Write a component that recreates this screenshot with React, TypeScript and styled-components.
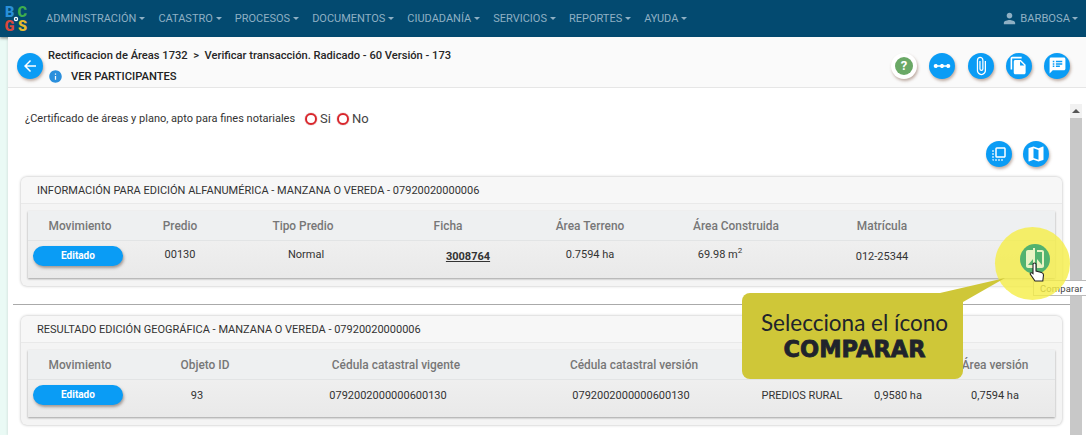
import React from 'react';
import styled, { createGlobalStyle } from 'styled-components';
import {
  MdArrowBack,
  MdAttachFile,
  MdCompare,
  MdFileCopy,
  MdFlipToFront,
  MdInfo,
  MdLinearScale,
  MdMap,
  MdPerson,
  MdSpeakerNotes,
} from 'react-icons/md';

const GlobalStyle = createGlobalStyle`
  html, body { margin: 0; padding: 0; height: 435px; overflow: hidden; background: #eafaf5; }
  body { font-family: Roboto, "Liberation Sans", sans-serif; color: #333; }
`;

const Page = styled.div`
  width: 1086px;
  height: 435px;
  position: relative;
  overflow: hidden;
`;

const Navbar = styled.header`
  height: 37px;
  background: #034a70;
  box-shadow: 0 1px 3px rgba(0, 0, 0, 0.5);
  display: flex;
  align-items: center;
  padding: 0 8px 0 3px;
  box-sizing: border-box;
`;

const Logo = styled.svg`
  width: 26px;
  height: 31px;
  margin-right: 17px;
  flex: none;
`;

const LogoLetter = styled.text`
  font-family: Roboto, sans-serif;
  font-weight: 900;
  font-size: 14.5px;
`;

const NavItem = styled.span`
  font-size: 11px;
  color: #8fb0c4;
  margin-right: 13px;
  white-space: nowrap;
  display: flex;
  align-items: center;
  &::after {
    content: '';
    margin-left: 3px;
    border-left: 3px solid transparent;
    border-right: 3px solid transparent;
    border-top: 3px solid #8fb0c4;
  }
`;

const NavUser = styled(NavItem)`
  && {
    margin: 0 0 0 auto;
  }
  font-size: 11.2px;
  gap: 2px;
  &::after {
    margin-left: 0;
  }
`;

const Content = styled.main`
  margin-left: 8px;
  height: 398px;
  background: #fff;
  box-shadow: -1px 0 2px rgba(0, 0, 0, 0.08);
`;

const TopBar = styled.div`
  height: 51px;
  background: #fafafa;
  border-bottom: 1px solid #e6e6e6;
  box-sizing: border-box;
  display: flex;
  align-items: center;
  padding: 7px 16px 0 9px;
`;

const RoundButton = styled.span<{ $white?: boolean; $size?: number }>`
  width: ${p => p.$size ?? 26}px;
  height: ${p => p.$size ?? 26}px;
  border-radius: 50%;
  flex: none;
  display: flex;
  align-items: center;
  justify-content: center;
  color: #fff;
  font-size: 18px;
  background: ${p => (p.$white ? '#fff' : '#0a9cf5')};
  box-shadow: 1px 2px 3px rgba(120, 80, 60, 0.45);
`;

const Crumbs = styled.div`
  margin-left: 5px;
  padding-top: 2px;
  display: flex;
  flex-direction: column;
  gap: 7px;
`;

const CrumbLine = styled.div`
  font-size: 11.15px;
  font-weight: 500;
  color: #262626;
  white-space: nowrap;
`;

const Participants = styled.div`
  display: flex;
  align-items: center;
  gap: 8px;
  font-size: 11.2px;
  font-weight: 500;
  color: #222;
  svg {
    width: 15px;
    height: 15px;
    color: #2a8fdc;
  }
`;

const TopActions = styled.div`
  margin-left: auto;
  display: flex;
  gap: 12.25px;
`;

const Green = styled.span`
  width: 18px;
  height: 18px;
  border-radius: 50%;
  background: #6aa866;
  color: #fff;
  font-size: 13px;
  font-weight: 700;
  line-height: 18px;
  text-align: center;
`;

const Body = styled.div`
  display: flex;
  height: 347px;
`;

const Scroll = styled.div`
  flex: 1;
  min-width: 0;
  padding: 0 0 0 5px;
`;

const Scrollbar = styled.div`
  width: 12px;
  margin: 16px 4px 0 0;
  flex: none;
  display: flex;
  flex-direction: column;
  align-items: center;
  background: #f1f1f1;
  &::before {
    content: '';
    margin: 5px 0;
    border-left: 4px solid transparent;
    border-right: 4px solid transparent;
    border-bottom: 4px solid #555;
  }
  &::after {
    content: '';
    flex: 1;
    align-self: stretch;
    background: #c8c8c8;
  }
`;

const Question = styled.div`
  display: flex;
  align-items: center;
  padding: 22px 0 0 12px;
  height: 17px;
  font-size: 11px;
  color: #333;
`;

const Radio = styled.span`
  width: 8px;
  height: 8px;
  border: 2px solid #d9252b;
  border-radius: 50%;
  box-shadow: 0 0 1px #a33;
  margin: 0 3px 0 10px;
`;

const RadioText = styled.span`
  font-size: 13px;
  color: #444;
  margin-right: -4px;
`;

const MapActions = styled.div`
  display: flex;
  justify-content: flex-end;
  gap: 11px;
  padding: 14px 21px 0 0;
  height: 25px;
`;

const Panel = styled.section`
  margin: 11px 0 0 8px;
  width: 1041px;
  box-sizing: border-box;
  border-radius: 6px;
  background: #f4f4f4;
  box-shadow: 0 0 3px rgba(0, 0, 0, 0.3);
  padding-bottom: 8px;
`;

const PanelTitle = styled.div`
  height: 26px;
  line-height: 28px;
  padding-left: 16px;
  font-size: 11px;
  color: #333;
  background: #f7f7f7;
  border-bottom: 1px solid #e9e9e9;
  border-radius: 6px 6px 0 0;
  margin-bottom: 7px;
`;

const Table = styled.div`
  margin: 0 7px;
  background: linear-gradient(#f4f4f4, #e9e9e9);
  box-shadow: 0 1px 2px rgba(0, 0, 0, 0.35);
`;

const Row = styled.div<{ $cols: string; $head?: boolean }>`
  display: grid;
  grid-template-columns: ${p => p.$cols};
  align-items: center;
  justify-items: center;
  box-sizing: border-box;
  height: ${p => (p.$head ? 30 : 37)}px;
  padding-bottom: ${p => (p.$head ? 0 : 7)}px;
  font-size: 11px;
  color: #333;
  ${p => p.$head && 'background: #eef0f1; border-bottom: 1px solid #e2e4e5; color: #777; font-size: 11.9px; font-weight: 500;'}
`;

const Pill = styled.span`
  width: 90px;
  height: 20px;
  border-radius: 10px;
  background: #0a9cf5;
  color: #fff;
  font-size: 10px;
  font-weight: 700;
  line-height: 20px;
  text-align: center;
  transform: translateX(-2px);
  box-shadow: 1px 2px 3px rgba(90, 70, 60, 0.5);
`;

const FichaLink = styled.span`
  font-weight: 700;
  text-decoration: underline;
  transform: translateX(20px);
`;

// Values in the reference sit a little off their column centre.
const Cell = styled.span<{ $x?: number; $y?: number }>`
  transform: translate(${p => p.$x ?? 0}px, ${p => p.$y ?? 0}px);
  sup {
    font-size: 8px;
    line-height: 0;
  }
`;

const Divider = styled.hr`
  margin: 18px 0 0;
  width: 1060px;
  border: none;
  border-top: 1px solid #aaa;
`;

const Tooltip = styled.div`
  position: absolute;
  left: 1033px;
  top: 280px;
  width: 53px;
  height: 16px;
  line-height: 15px;
  padding-left: 6px;
  background: #fff;
  border: 1px solid #bbb;
  border-right: none;
  box-sizing: border-box;
  font-size: 9.4px;
  letter-spacing: 0.2px;
  color: #444;
`;

const Highlight = styled.div`
  position: absolute;
  left: 995px;
  top: 227px;
  width: 75px;
  height: 73px;
  border-radius: 50%;
  background: rgba(245, 238, 70, 0.8);
  display: flex;
  align-items: center;
  justify-content: center;
`;

const CompareButton = styled.span`
  width: 30px;
  height: 30px;
  border-radius: 50%;
  background: #52b26f;
  color: #e9f3c4;
  font-size: 24px;
  transform: translate(2px, -5px);
  display: flex;
  align-items: center;
  justify-content: center;
`;

const Cursor = styled.svg`
  position: absolute;
  left: 1029px;
  top: 262px;
  width: 16px;
  height: 22px;
`;

const Callout = styled.div`
  position: absolute;
  left: 742px;
  top: 293px;
  width: 221px;
  height: 86px;
  border-radius: 8px;
  background: #cfc738;
  display: flex;
  flex-direction: column;
  align-items: center;
  justify-content: center;
  color: #20232c;
  &::before {
    content: '';
    position: absolute;
    left: 193px;
    top: -15px;
    width: 75px;
    height: 24px;
    background: #cfc738;
    clip-path: polygon(70px 0, 5px 15px, 28px 24px);
  }
`;

const CalloutLine = styled.div`
  font-family: Lato, sans-serif;
  font-size: 22.5px;
  line-height: 26px;
  transform: translateX(2px);
`;

const CalloutStrong = styled.div`
  font-family: "DejaVu Sans", sans-serif;
  font-weight: 700;
  font-size: 22.5px;
  line-height: 26px;
  transform: translateX(2px);
  -webkit-text-stroke: 0.8px #20232c;
`;

const menu = ['ADMINISTRACIÓN', 'CATASTRO', 'PROCESOS', 'DOCUMENTOS', 'CIUDADANÍA', 'SERVICIOS', 'REPORTES', 'AYUDA'];
const alfaCols = '104px 96px 150px 140px 144px 148px 144px 1fr';
const geoCols = '104px 146px 236px 240px 96px 96px 98px 1fr';

export default function App() {
  return (
    <Page>
      <GlobalStyle />
      <Navbar>
        <Logo viewBox="0 0 26 31">
          <LogoLetter x="2" y="13.5" fill="#2a90d8">B</LogoLetter>
          <LogoLetter x="14.5" y="13.5" fill="#3fae4c">C</LogoLetter>
          <LogoLetter x="1.5" y="28" fill="#d9483c">G</LogoLetter>
          <LogoLetter x="15" y="28" fill="#e6bc2e">S</LogoLetter>
          <circle cx="13" cy="16" r="2.2" fill="#fff" />
          <circle cx="13" cy="16" r="0.9" fill="#034a70" />
        </Logo>
        {menu.map(item => <NavItem key={item}>{item}</NavItem>)}
        <NavUser>
          <MdPerson size={17} />
          BARBOSA
        </NavUser>
      </Navbar>
      <Content>
        <TopBar>
          <RoundButton>
            <MdArrowBack size={18} />
          </RoundButton>
          <Crumbs>
            <CrumbLine>Rectificacion de Áreas 1732 &nbsp;&gt;&nbsp; Verificar transacción. Radicado - 60 Versión - 173</CrumbLine>
            <Participants><MdInfo />VER PARTICIPANTES</Participants>
          </Crumbs>
          <TopActions>
            <RoundButton $white><Green>?</Green></RoundButton>
            <RoundButton><MdLinearScale size={20} /></RoundButton>
            <RoundButton><MdAttachFile size={20} /></RoundButton>
            <RoundButton><MdFileCopy size={19} /></RoundButton>
            <RoundButton><MdSpeakerNotes size={19} /></RoundButton>
          </TopActions>
        </TopBar>
        <Body>
          <Scroll>
            <Question>
              ¿Certificado de áreas y plano, apto para fines notariales
              <Radio /><RadioText>Si</RadioText>
              <Radio /><RadioText>No</RadioText>
            </Question>
            <MapActions>
              <RoundButton><MdFlipToFront size={18} /></RoundButton>
              <RoundButton><MdMap size={20} /></RoundButton>
            </MapActions>
            <Panel>
              <PanelTitle>INFORMACIÓN PARA EDICIÓN ALFANUMÉRICA - MANZANA O VEREDA - 07920020000006</PanelTitle>
              <Table>
                <Row $head $cols={alfaCols}>
                  <span>Movimiento</span><span>Predio</span><span>Tipo Predio</span><span>Ficha</span>
                  <span>Área Terreno</span><span>Área Construida</span><span>Matrícula</span>
                </Row>
                <Row $cols={alfaCols}>
                  <Pill>Editado</Pill>
                  <Cell $y={-2}>00130</Cell>
                  <Cell $x={3} $y={-2}>Normal</Cell>
                  <FichaLink>3008764</FichaLink>
                  <Cell $y={-2}>0.7594 ha</Cell>
                  <Cell $x={-16} $y={-2}>69.98 m<sup>2</sup></Cell>
                  <Cell>012-25344</Cell>
                </Row>
              </Table>
            </Panel>
            <Divider />
            <Panel>
              <PanelTitle>RESULTADO EDICIÓN GEOGRÁFICA - MANZANA O VEREDA - 07920020000006</PanelTitle>
              <Table>
                <Row $head $cols={geoCols}>
                  <span>Movimiento</span><span>Objeto ID</span><span>Cédula catastral vigente</span>
                  <span>Cédula catastral versión</span><span /><span /><span>Área versión</span>
                </Row>
                <Row $cols={geoCols}>
                  <Pill>Editado</Pill>
                  <Cell $x={-8}>93</Cell>
                  <Cell $x={-8}>0792002000000600130</Cell>
                  <Cell $x={-3}>0792002000000600130</Cell>
                  <Cell>PREDIOS RURAL</Cell>
                  <Cell>0,9580 ha</Cell>
                  <Cell>0,7594 ha</Cell>
                </Row>
              </Table>
            </Panel>
          </Scroll>
          <Scrollbar />
        </Body>
      </Content>
      <Tooltip>Comparar</Tooltip>
      <Highlight>
        <CompareButton><MdCompare /></CompareButton>
      </Highlight>
      <Cursor viewBox="0 0 16 22">
        <path d="M4 2.5a1.5 1.5 0 0 1 3 0V9l5.5 1.5c1.5.5 2 1 2 2.5l-.7 6H6L1.5 12.5c-1-1.5.7-2.5 2.5-1z" fill="#fff" stroke="#222" strokeWidth="1.1" />
      </Cursor>
      <Callout>
        <CalloutLine>Selecciona el ícono</CalloutLine>
        <CalloutStrong>COMPARAR</CalloutStrong>
      </Callout>
    </Page>
  );
}
